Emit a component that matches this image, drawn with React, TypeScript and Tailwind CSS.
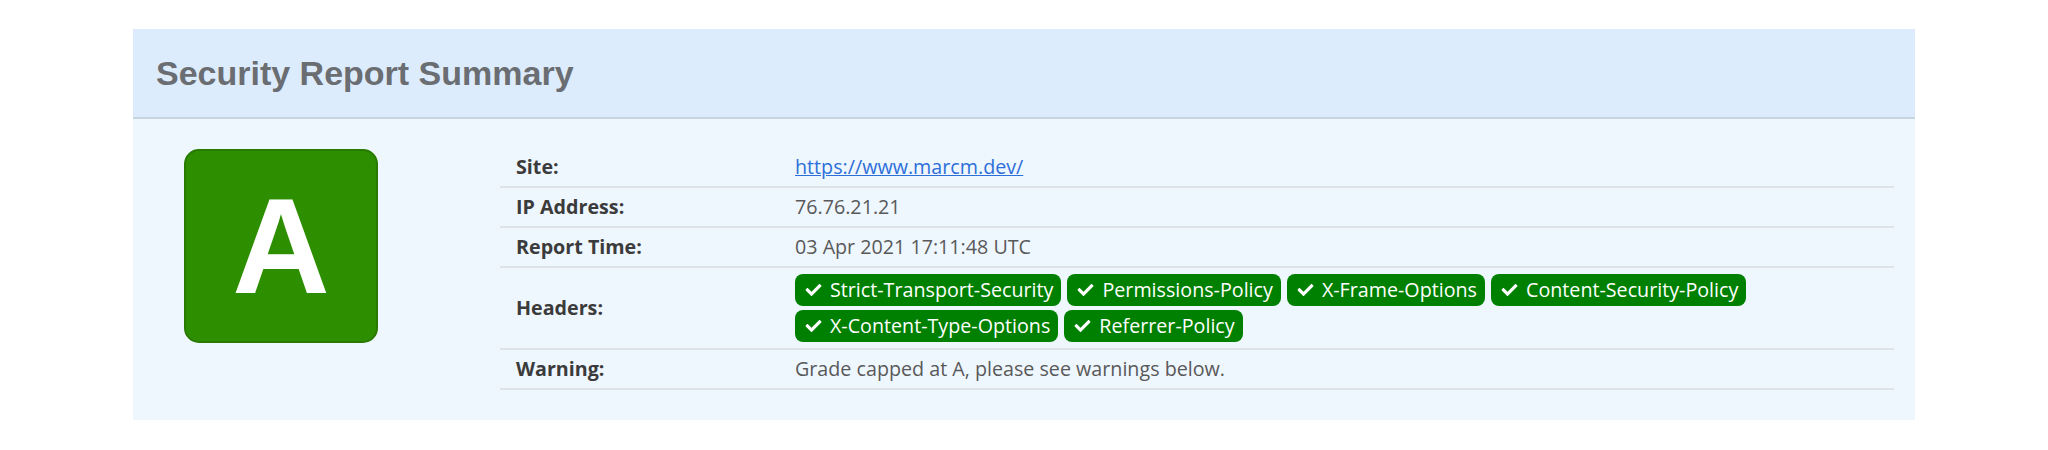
import React from 'react';

const HEADERS = [
  'Strict-Transport-Security',
  'Permissions-Policy',
  'X-Frame-Options',
  'Content-Security-Policy',
  'X-Content-Type-Options',
  'Referrer-Policy',
];

function CheckIcon() {
  return (
    <svg viewBox="0 0 512 512" className="h-[16px] w-[17px] fill-white">
      <path d="M173.898 439.404l-166.4-166.4c-9.997-9.997-9.997-26.206 0-36.204l36.203-36.204c9.997-9.998 26.207-9.998 36.204 0L192 312.69 432.095 72.596c9.997-9.997 26.207-9.997 36.204 0l36.203 36.204c9.997 9.997 9.997 26.206 0 36.204l-294.4 294.401c-9.998 9.997-26.207 9.997-36.204-.001z" />
    </svg>
  );
}

function Row({ label, children, center }: { label: string; children: React.ReactNode; center?: boolean }) {
  return (
    <div className={`flex border-b-2 border-[#dfe2e6] py-[6px] ${center ? 'items-center' : ''}`}>
      <div className="w-[295px] shrink-0 pl-4 font-bold text-[#3b3b3b]">{label}</div>
      <div className="flex-1 text-[#595959]">{children}</div>
    </div>
  );
}

export default function App() {
  return (
    <div className="min-h-screen bg-white pl-[133px] pt-[29px]">
      <div className="w-[1782px] bg-[#eef6fe]">
        <div className="flex h-[90px] items-center border-b-2 border-[#c7d6de] bg-[#dcecfc] pl-[23px]">
          <h1 className="font-['Liberation_Sans',Arial,sans-serif] text-[34px] font-bold text-[#6a6d71]">
            Security Report Summary
          </h1>
        </div>
        <div className="flex pb-[30px] pl-[51px] pr-[21px] pt-[29px]">
          <div className="mt-[1px] flex h-[194px] w-[194px] shrink-0 items-center justify-center rounded-[15px] border-2 border-[#287a00] bg-[#2d8f00]">
            <span className="font-['Liberation_Sans',Arial,sans-serif] text-[135px] font-bold leading-none text-white">
              A
            </span>
          </div>
          <div className="ml-[122px] flex-1 font-['Open_Sans','Noto_Sans',sans-serif] text-[19.7px] leading-[26px]">
            <Row label="Site:">
              <a href="#" className="text-[#2d6fd8] underline">
                https://www.marcm.dev/
              </a>
            </Row>
            <Row label="IP Address:">76.76.21.21</Row>
            <Row label="Report Time:">03 Apr 2021 17:11:48 UTC</Row>
            <Row label="Headers:" center>
              <div className="flex flex-wrap gap-x-[6px] gap-y-[4px]">
                {HEADERS.map((h) => (
                  <span
                    key={h}
                    className="inline-flex h-[32px] items-center gap-[8px] rounded-[8px] bg-[#008000] pl-[10px] pr-[8px] text-white"
                  >
                    <CheckIcon />
                    {h}
                  </span>
                ))}
              </div>
            </Row>
            <Row label="Warning:">Grade capped at A, please see warnings below.</Row>
          </div>
        </div>
      </div>
    </div>
  );
}
